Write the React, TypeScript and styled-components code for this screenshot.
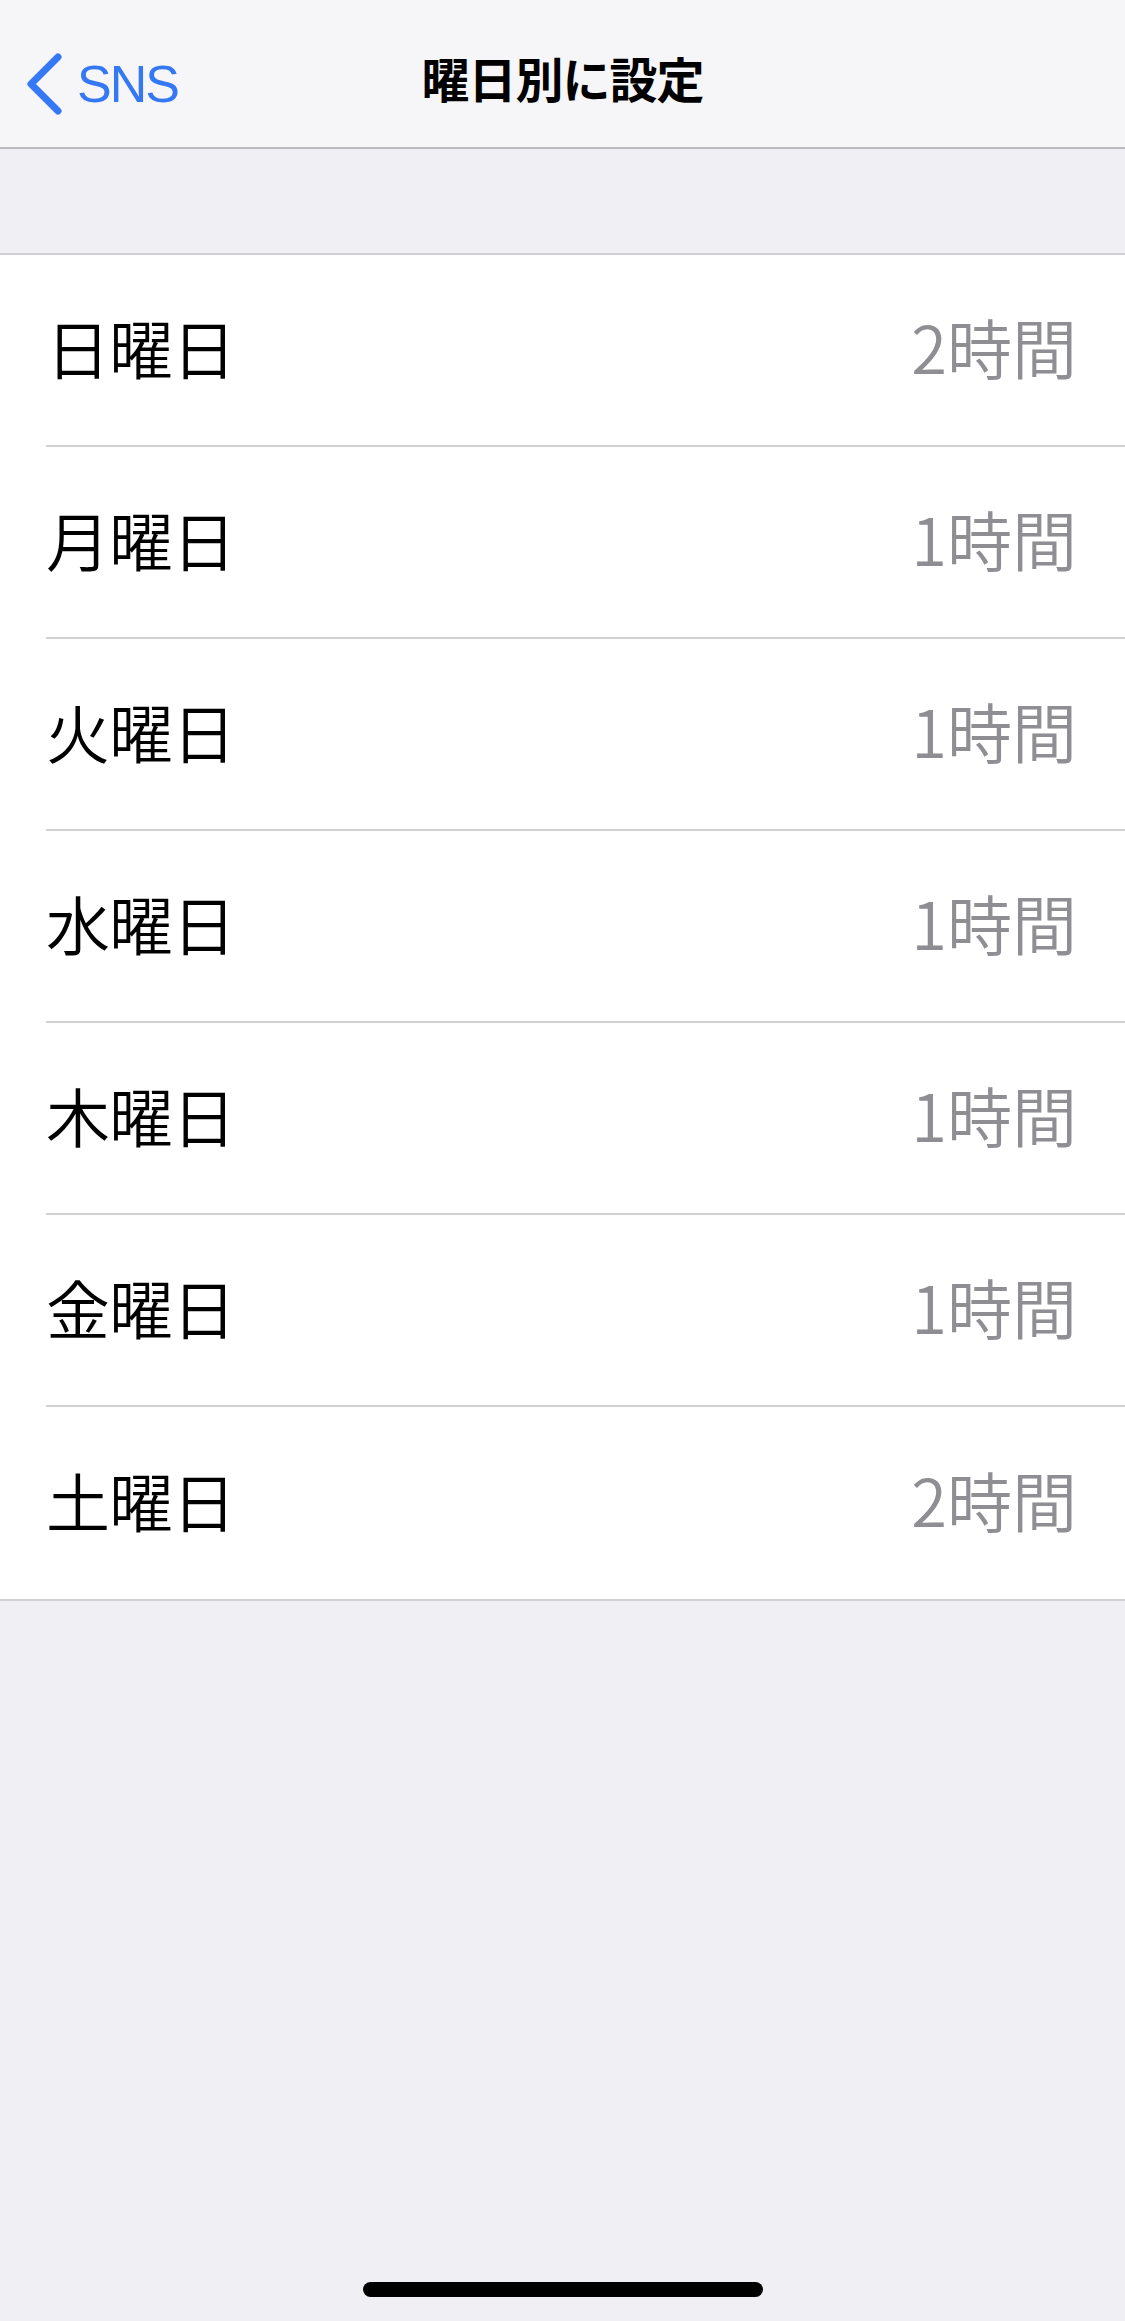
import * as React from 'react';
import styled, { createGlobalStyle } from 'styled-components';

const GlobalStyle = createGlobalStyle`
  html, body {
    margin: 0;
    padding: 0;
    background: #efeff4;
  }
  body {
    font-family: "Noto Sans CJK JP", "Noto Sans", "Liberation Sans", sans-serif;
    -webkit-font-smoothing: antialiased;
  }
`;

const Page = styled.div`
  display: flex;
  flex-direction: column;
  min-height: 100vh;
  background: #efeff4;
`;

const NavBar = styled.header`
  display: grid;
  grid-template-columns: 1fr auto 1fr;
  align-items: center;
  height: 149px;
  box-sizing: border-box;
  background: #f6f6f8;
  border-bottom: 2px solid #bcbcc0;
`;

const BackButton = styled.div`
  display: flex;
  align-items: center;
  gap: 14px;
  padding-left: 25px;
  margin-top: 20px;
  color: #3478f6;
`;

const BackLabel = styled.span`
  font-family: "Liberation Sans", "Noto Sans", sans-serif;
  font-size: 52px;
  letter-spacing: -2px;
  line-height: 1;
`;

const Title = styled.h1`
  margin: 6px 0 0;
  font-size: 48px;
  font-weight: 700;
  color: #000;
  letter-spacing: -1px;
`;

const Gap = styled.div`
  height: 104px;
`;

const List = styled.ul`
  margin: 0;
  padding: 0;
  list-style: none;
  background: #fff;
  border-top: 2px solid #d1d1d6;
  border-bottom: 2px solid #d1d1d6;
`;

const Row = styled.li`
  padding-left: 46px;
`;

const RowInner = styled.div<{ $last?: boolean }>`
  display: flex;
  align-items: center;
  justify-content: space-between;
  height: 192px;
  box-sizing: border-box;
  padding-right: 48px;
  padding-bottom: 8px;
  border-bottom: ${(p) => (p.$last ? 'none' : '2px solid #d1d1d6')};
`;

const Label = styled.span`
  font-size: 64px;
  font-weight: 350;
  color: #000;
  letter-spacing: -1px;
`;

const Value = styled.span`
  font-size: 65px;
  font-weight: 350;
  color: #8e8e93;
`;

const Fill = styled.div`
  flex: 1;
`;

const HomeIndicator = styled.div`
  align-self: center;
  width: 400px;
  height: 15px;
  border-radius: 8px;
  background: #000;
  margin-bottom: 24px;
`;

const days = [
  { day: '日曜日', hours: '2時間' },
  { day: '月曜日', hours: '1時間' },
  { day: '火曜日', hours: '1時間' },
  { day: '水曜日', hours: '1時間' },
  { day: '木曜日', hours: '1時間' },
  { day: '金曜日', hours: '1時間' },
  { day: '土曜日', hours: '2時間' },
];

const Chevron = () => (
  <svg width="38" height="62" viewBox="0 0 38 62" fill="none">
    <polyline
      points="33,4 6,31 33,58"
      stroke="#3478f6"
      strokeWidth="7"
      strokeLinecap="round"
      strokeLinejoin="round"
    />
  </svg>
);

export default function App() {
  return (
    <Page>
      <GlobalStyle />
      <NavBar>
        <BackButton>
          <Chevron />
          <BackLabel>SNS</BackLabel>
        </BackButton>
        <Title>曜日別に設定</Title>
        <div />
      </NavBar>
      <Gap />
      <List>
        {days.map((d, i) => (
          <Row key={d.day}>
            <RowInner $last={i === days.length - 1}>
              <Label>{d.day}</Label>
              <Value>{d.hours}</Value>
            </RowInner>
          </Row>
        ))}
      </List>
      <Fill />
      <HomeIndicator />
    </Page>
  );
}
